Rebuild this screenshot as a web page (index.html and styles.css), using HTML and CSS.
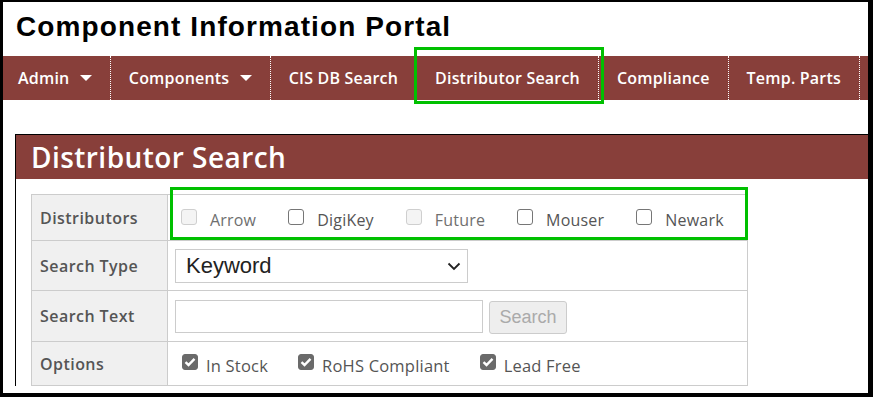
FILE: index.html
```html
<!DOCTYPE html>
<html>
<head>
<meta charset="utf-8">
<title>Distributor Search</title>
<link rel="stylesheet" href="styles.css">
</head>
<body>
<div class="page">

<h1>Component Information Portal</h1>

<ul class="nav">
  <li>Admin <span class="caret"></span></li>
  <li>Components <span class="caret"></span></li>
  <li>CIS DB Search</li>
  <li class="current">Distributor Search</li>
  <li>Compliance</li>
  <li>Temp. Parts</li>
  <li class="rest"></li>
</ul>

<div class="panel">
  <h2>Distributor Search</h2>
  <div class="panel-body">
  <table class="form">
  <tbody>
    <tr class="r1">
      <th>Distributors</th>
      <td>
        <div class="checks dist">
          <label class="off"><span class="box"></span>Arrow</label>
          <label><span class="box"></span>DigiKey</label>
          <label class="off"><span class="box"></span>Future</label>
          <label><span class="box"></span>Mouser</label>
          <label><span class="box"></span>Newark</label>
        </div>
      </td>
    </tr>
    <tr class="r2">
      <th>Search Type</th>
      <td>
        <div class="select">
          <span>Keyword</span>
          <svg class="chev" width="14" height="9" viewBox="0 0 14 9"><path d="M1.5 1.5 L7 7 L12.5 1.5" fill="none" stroke="#222" stroke-width="1.8"/></svg>
        </div>
      </td>
    </tr>
    <tr class="r3">
      <th>Search Text</th>
      <td>
        <div class="searchline">
          <input type="text" class="text">
          <button class="btn" disabled>Search</button>
        </div>
      </td>
    </tr>
    <tr class="r4">
      <th>Options</th>
      <td>
        <div class="checks opts">
          <label><span class="box on"><svg width="12" height="10" viewBox="0 0 12 10"><path d="M1.5 5.2 L4.5 8 L10.5 1.8" fill="none" stroke="#fff" stroke-width="2.4"/></svg></span>In Stock</label>
          <label><span class="box on"><svg width="12" height="10" viewBox="0 0 12 10"><path d="M1.5 5.2 L4.5 8 L10.5 1.8" fill="none" stroke="#fff" stroke-width="2.4"/></svg></span>RoHS Compliant</label>
          <label><span class="box on"><svg width="12" height="10" viewBox="0 0 12 10"><path d="M1.5 5.2 L4.5 8 L10.5 1.8" fill="none" stroke="#fff" stroke-width="2.4"/></svg></span>Lead Free</label>
        </div>
      </td>
    </tr>
  </tbody>
  </table>
  </div>
</div>

<!-- annotation boxes -->
<div class="mark mark-nav"></div>
<div class="mark mark-dist"></div>

</div>
</body>
</html>
```

FILE: styles.css
```css
html, body { margin: 0; height: 100%; }
body {
  background: #000;
  padding: 2px 5px 4px 3px;
  box-sizing: border-box;
  font-family: "Open Sans", "Noto Sans", sans-serif;
}

.page {
  background: #fff;
  height: 391px;
  position: relative;
  overflow: hidden;
}

h1 {
  margin: 0;
  height: 54px;
  box-sizing: border-box;
  padding: 10px 0 0 13px;
  font: bold 28px/30px "Liberation Sans", Arial, sans-serif;
  letter-spacing: 1.1px;
  color: #000;
}

/* top menu */
.nav {
  display: flex;
  margin: 0;
  padding: 0;
  list-style: none;
  height: 44px;
  background: #883f3a;
}
.nav li {
  color: #fff;
  font-weight: 600;
  font-size: 16px;
  letter-spacing: 0.2px;
  line-height: 44px;
  padding: 0 18px;
  border-right: 1px dotted #fff;
  white-space: nowrap;
}
.nav li:first-child { padding-left: 15px; }
.nav li.rest { flex: 1; border: 0; padding: 0; }
.caret {
  display: inline-block;
  width: 0; height: 0;
  margin-left: 6px;
  vertical-align: 3px;
  border-left: 6px solid transparent;
  border-right: 6px solid transparent;
  border-top: 6px solid #fff;
}

/* panel */
.panel {
  margin: 34px 0 0 12px;
  border-left: 1px solid #000;
  border-top: 1px solid #000;
}
.panel h2 {
  margin: 0;
  height: 44px;
  padding-left: 15px;
  background: #883f3a;
  color: #fff;
  font-size: 28px;
  letter-spacing: 0.45px;
  font-weight: 600;
  line-height: 44px;
}
.panel-body { padding: 15px 0 0 15px; }

table.form {
  border-collapse: collapse;
  width: 717px;
}
.form th, .form td {
  border: 1px solid #ccc;
  padding: 0;
}
.form th {
  width: 127px;
  background: #f0f0f0;
  color: #555;
  text-align: left;
  font-size: 16px;
  letter-spacing: 0.45px;
  font-weight: 600;
  padding-left: 8px;
}
.form td { padding-left: 7px; color: #555; font-size: 16px; letter-spacing: 0.2px; }
.r1 { height: 46px; }
.r2 { height: 50px; }
.r3 { height: 51px; }
.r4 { height: 44px; }

.checks { display: flex; gap: 31px; }
.checks label { display: flex; align-items: center; white-space: nowrap; }
.dist { padding-left: 6px; padding-top: 4px; }
.dist label { margin-right: 1px; }
.dist .box { margin-right: 13px; position: relative; top: -3px; }
.dist .off { color: #6f6f6f; }
.box {
  display: inline-flex;
  align-items: center;
  justify-content: center;
  width: 16px;
  height: 16px;
  box-sizing: border-box;
  border: 1.5px solid #767676;
  border-radius: 3px;
  background: #fff;
}
.off .box { border-color: #cfcfcf; background: #f4f4f4; }
.box.on { background: #6a6a6a; border-color: #6a6a6a; }
.opts { padding-left: 7px; padding-top: 4px; gap: 30px; }
.opts label { font-size: 16.5px; }
.opts .box { margin-right: 8px; position: relative; top: -4px; }

.select {
  position: relative;
  width: 293px;
  height: 34px;
  box-sizing: border-box;
  border: 1px solid #ccc;
  padding-left: 10px;
  font: 22px/32px "Liberation Sans", Arial, sans-serif;
  letter-spacing: 0;
  color: #222;
}
.chev { position: absolute; right: 6px; top: 12px; }

.searchline { display: flex; align-items: center; gap: 6px; }
.text {
  width: 308px;
  height: 33px;
  box-sizing: border-box;
  border: 1px solid #ccc;
  margin: 0;
}
.btn {
  width: 78px;
  height: 33px;
  box-sizing: border-box;
  border: 1px solid #ccc;
  border-radius: 3px;
  background: #eee;
  color: #aaa;
  font: 18px "Liberation Sans", Arial, sans-serif;
  margin-top: 2px;
}

.mark {
  position: absolute;
  border: 3px solid #00c000;
}
.mark-nav { left: 411px; top: 45px; width: 184px; height: 51px; }
.mark-dist { left: 167px; top: 185px; width: 572px; height: 47px; }
```
